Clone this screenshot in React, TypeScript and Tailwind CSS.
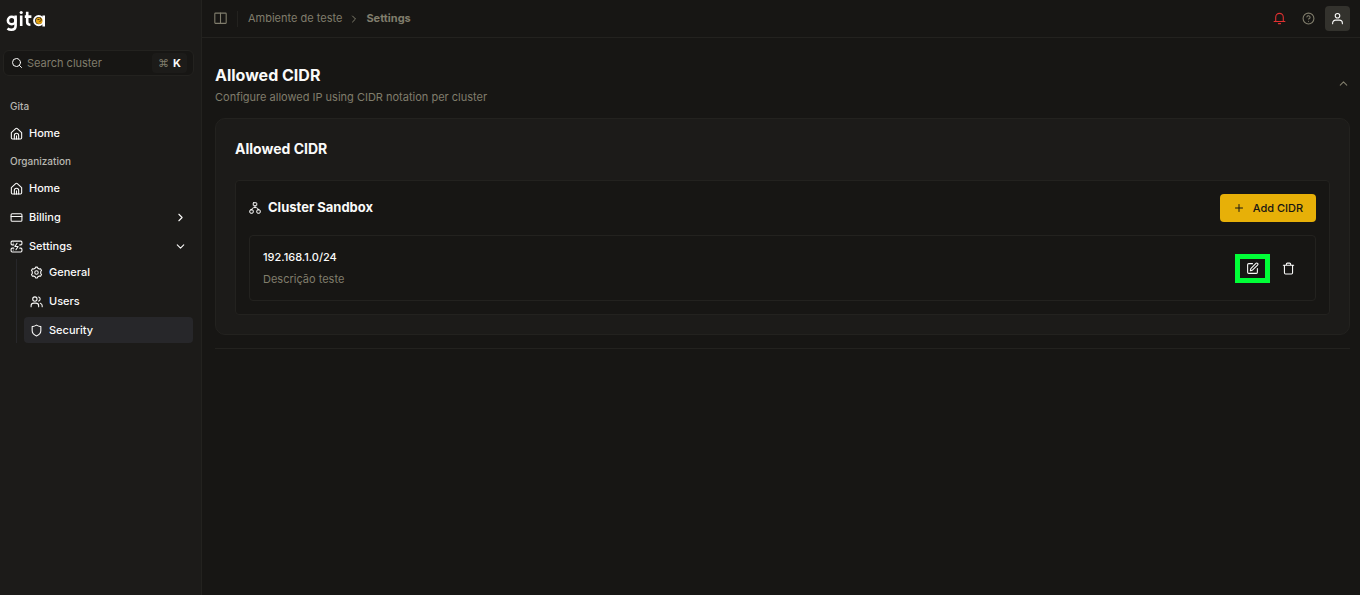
import type { ReactNode } from "react";
import { Search, CreditCard, ChevronRight, ChevronDown, ChevronUp, CircleHelp, Plus, SquarePen } from "lucide-react";

const item = "flex h-[26px] items-center gap-[6px] rounded px-[10px] font-medium text-[#fafaf9]";

function Icon({ children, width = 2, className = "size-[13px]" }: { children: ReactNode; width?: number; className?: string }) {
  return (
    <svg viewBox="0 0 24 24" className={className} fill="none" stroke="currentColor" strokeWidth={width} strokeLinecap="round" strokeLinejoin="round" aria-hidden="true">
      {children}
    </svg>
  );
}

function HouseIcon() {
  return (
    <Icon>
      <path d="M2.500 10.500 10.500 3a2.200 2.200 0 0 1 3 0l8 7.500V20a2 2 0 0 1-2 2h-15a2 2 0 0 1-2-2z" />
      <path d="M8 22v-6.500a4 4 0 0 1 8 0V22M12 16v6" />
    </Icon>
  );
}

function GearIcon() {
  return (
    <Icon>
      <path d="M9.500 4.200 10.300 2h3.400l.8 2.200 2.700 1.500 2.300-.5 1.800 3-1.500 1.900v3.800l1.500 1.900-1.800 3-2.300-.5-2.700 1.500-.8 2.200h-3.400l-.8-2.200-2.700-1.500-2.300.5-1.800-3 1.500-1.900v-3.800L2.700 8.200l1.800-3 2.300.5z" />
      <circle cx="12" cy="12" r="3.200" />
    </Icon>
  );
}

function UsersIcon() {
  return (
    <Icon>
      <circle cx="9" cy="7.500" r="4" />
      <path d="M2 21.500v-1.500a5 5 0 0 1 5-5h4a5 5 0 0 1 5 5v1.500M16 3.700a4 4 0 0 1 0 7.600M19 15.200a5 5 0 0 1 3.500 4.800v1.500" />
    </Icon>
  );
}

function ShieldIcon() {
  return (
    <Icon>
      <path d="M12 2c2.500 1.700 5 2.600 8 2.800V12c0 5-3 8-8 10-5-2-8-5-8-10V4.800c3-.2 5.500-1.100 8-2.800z" />
    </Icon>
  );
}

function BellIcon() {
  return (
    <Icon>
      <path d="M2 17.500h20M5 17.500V9.500a7 7 0 0 1 14 0v8M10 21.500h4" />
    </Icon>
  );
}

function PersonIcon() {
  return (
    <Icon>
      <circle cx="12" cy="7" r="4.200" />
      <path d="M3 21.500v-1a5.500 5.500 0 0 1 5.500-5.500h7a5.500 5.500 0 0 1 5.500 5.500v1" />
    </Icon>
  );
}

function PanelIcon() {
  return (
    <Icon>
      <rect x="1.500" y="2" width="21" height="19" rx="1" />
      <path d="M12 2v19" />
    </Icon>
  );
}

function TrashIcon() {
  return (
    <Icon>
      <path d="M2.500 6h19M4.500 6v14a2 2 0 0 0 2 2h11a2 2 0 0 0 2-2V6M8 6V4a2 2 0 0 1 2-2h4a2 2 0 0 1 2 2v2" />
    </Icon>
  );
}

function ClusterIcon() {
  return (
    <Icon className="size-3">
      <rect x="8.500" y="1.500" width="7" height="6" rx="1" />
      <rect x="1.500" y="15.500" width="7" height="7" rx="2.500" />
      <rect x="15.500" y="15.500" width="7" height="7" rx="2.500" />
      <path d="M12 7.500V11M5 15.500c0-2.500 3-4.500 7-4.500s7 2 7 4.500" />
    </Icon>
  );
}

function SettingsPanelIcon() {
  return (
    <Icon>
      <path d="M7 9H4a2 2 0 0 1-2-2V4a2 2 0 0 1 2-2h16a2 2 0 0 1 2 2v3a2 2 0 0 1-2 2h-2M7 15H4a2 2 0 0 0-2 2v3a2 2 0 0 0 2 2h16a2 2 0 0 0 2-2v-3a2 2 0 0 0-2-2h-2M13 6l-4 6h6l-4 6M6 5.500h.01M6 18.500h.01" />
    </Icon>
  );
}

function Logo() {
  return (
    <a href="#" aria-label="gita" className="block w-fit">
      <svg viewBox="0 0 40 24" className="h-6 w-10" fill="none" stroke="#fff" strokeWidth="2.600">
        <circle cx="5.700" cy="11.500" r="3.800" />
        <path d="M9.600 6.500v10.200q0 4-4.200 4q-2.400 0-3.900-1.300M15.200 6.500V17M21.200 2.800v10.400q0 2.500 3.200 2.500M18.800 7.600h6.600M37.700 6.500V17.500" />
        <circle cx="15.200" cy="3.500" r="1.600" fill="#fff" stroke="none" />
        <circle cx="32.700" cy="11.600" r="4.600" strokeWidth="2" />
        <circle cx="33.200" cy="11.800" r="3.300" fill="#dfa013" stroke="none" />
        <path d="M31.500 10.500h2M34 8.500l1.500 2.500-2 2" stroke="#4a350a" strokeWidth="1" />
      </svg>
    </a>
  );
}

function NavItem({ icon, label, end, active }: { icon: ReactNode; label: string; end?: ReactNode; active?: boolean }) {
  return (
    <a href="#" className={active ? item + " bg-[#27272a]" : item}>
      {icon}
      <span className="grow">{label}</span>
      {end}
    </a>
  );
}

export default function App() {
  return (
    <div className="flex min-h-screen bg-[#171614] font-['Inter',sans-serif] text-[11px] text-[#fafaf9]">
      <aside className="w-[202px] shrink-0 border-r border-[#23221f] bg-[#1c1b19] pt-[9px]">
        <div className="px-[6px]"><Logo /></div>
        <label className="mx-[3px] mt-[17px] flex h-[26px] items-center gap-1 rounded-md border border-[#23221f] bg-[#171614] pr-[6px] pl-[7px] mr-[7px]">
          <Search className="size-3 shrink-0" />
          <input type="search" placeholder="Search cluster" aria-label="Search cluster" className="min-w-0 grow bg-transparent outline-none placeholder:text-[#807d6c]" />
          <kbd className="flex h-5 items-center gap-1 rounded bg-[#1c1b19] px-[6px] font-['Inter',sans-serif] text-[11px] font-bold">
            <span className="font-normal text-[#807d6c]">⌘</span>K
          </kbd>
        </label>
        <nav>
          <h2 className="mt-[22px] px-[10px] text-[10px] leading-4 font-medium text-[#b9b8b2]">Gita</h2>
          <div className="mt-[6px]"><NavItem icon={<HouseIcon />} label="Home" /></div>
          <h2 className="mt-[7px] px-[10px] text-[10px] leading-4 font-medium text-[#b9b8b2]">Organization</h2>
          <div className="mt-[6px] flex flex-col gap-[3px]">
            <NavItem icon={<HouseIcon />} label="Home" />
            <NavItem icon={<CreditCard className="size-[13px]" />} label="Billing" end={<ChevronRight className="mr-1 size-[13px]" />} />
            <NavItem icon={<SettingsPanelIcon />} label="Settings" end={<ChevronDown className="mr-1 size-[13px]" />} />
          </div>
          <div className="mr-2 ml-4 flex flex-col gap-[3px] border-l border-[#27272a] pl-[7px] [&>a]:px-[6px]">
            <NavItem icon={<GearIcon />} label="General" />
            <NavItem icon={<UsersIcon />} label="Users" />
            <NavItem icon={<ShieldIcon />} label="Security" active />
          </div>
        </nav>
      </aside>
      <div className="min-w-0 grow">
        <header className="flex h-[38px] items-center border-b border-[#23221f] pr-[10px] pl-3 text-[#807d6c]">
          <button aria-label="Toggle sidebar"><PanelIcon /></button>
          <span className="mx-[10px] h-4 w-px bg-[#23221f]" />
          <nav aria-label="Breadcrumb" className="flex grow items-center gap-[6px]">
            <a href="#">Ambiente de teste</a>
            <ChevronRight className="size-3" />
            <a href="#" className="font-bold">Settings</a>
          </nav>
          <button aria-label="Notifications" className="mr-4 text-[#e03131]"><BellIcon /></button>
          <button aria-label="Help" className="mr-[10px]"><CircleHelp className="size-[13px]" /></button>
          <button aria-label="Account" className="grid size-[25px] place-items-center rounded bg-[#33322d] text-[#fafaf9]"><PersonIcon /></button>
        </header>
        <main className="pt-[25px] pr-[10px] pl-[13px]">
          <div className="flex items-start">
            <div className="grow">
              <h1 className="text-[16px] leading-6 font-bold">Allowed CIDR</h1>
              <p className="leading-5 text-[#807d6c]">Configure allowed IP using CIDR notation per cluster</p>
            </div>
            <button aria-label="Collapse" className="py-[14px] text-[#807d6c]"><ChevronUp className="size-[13px]" /></button>
          </div>
          <section className="mt-[11px] rounded-[10px] border border-[#23221f] bg-[#1c1b19] p-[19px]">
            <h2 className="text-[14px] leading-[22px] font-bold">Allowed CIDR</h2>
            <div className="mt-5 rounded border border-[#23221f] bg-[#171614] p-[13px]">
              <div className="flex items-center gap-[7px]">
                <ClusterIcon />
                <h3 className="grow text-[13px] font-bold">Cluster Sandbox</h3>
                <button className="flex h-7 w-24 items-center justify-center gap-2 rounded bg-[#e7b008] font-medium text-[#171614]"><Plus className="size-3" />Add CIDR</button>
              </div>
              <div className="mt-[13px] flex items-center rounded border border-[#23221f] p-[13px]">
                <div className="grow">
                  <p className="leading-4 font-medium">192.168.1.0/24</p>
                  <p className="mt-[6px] leading-4 text-[#807d6c]">Descrição teste</p>
                </div>
                <button aria-label="Edit" className="grid h-[29px] w-[35px] place-items-center border-[5px] border-[#00ff37]"><SquarePen className="size-[13px]" /></button>
                <button aria-label="Delete" className="mr-[7px] ml-3"><TrashIcon /></button>
              </div>
            </div>
          </section>
          <hr className="mt-[13px] border-[#23221f]" />
        </main>
      </div>
    </div>
  );
}
